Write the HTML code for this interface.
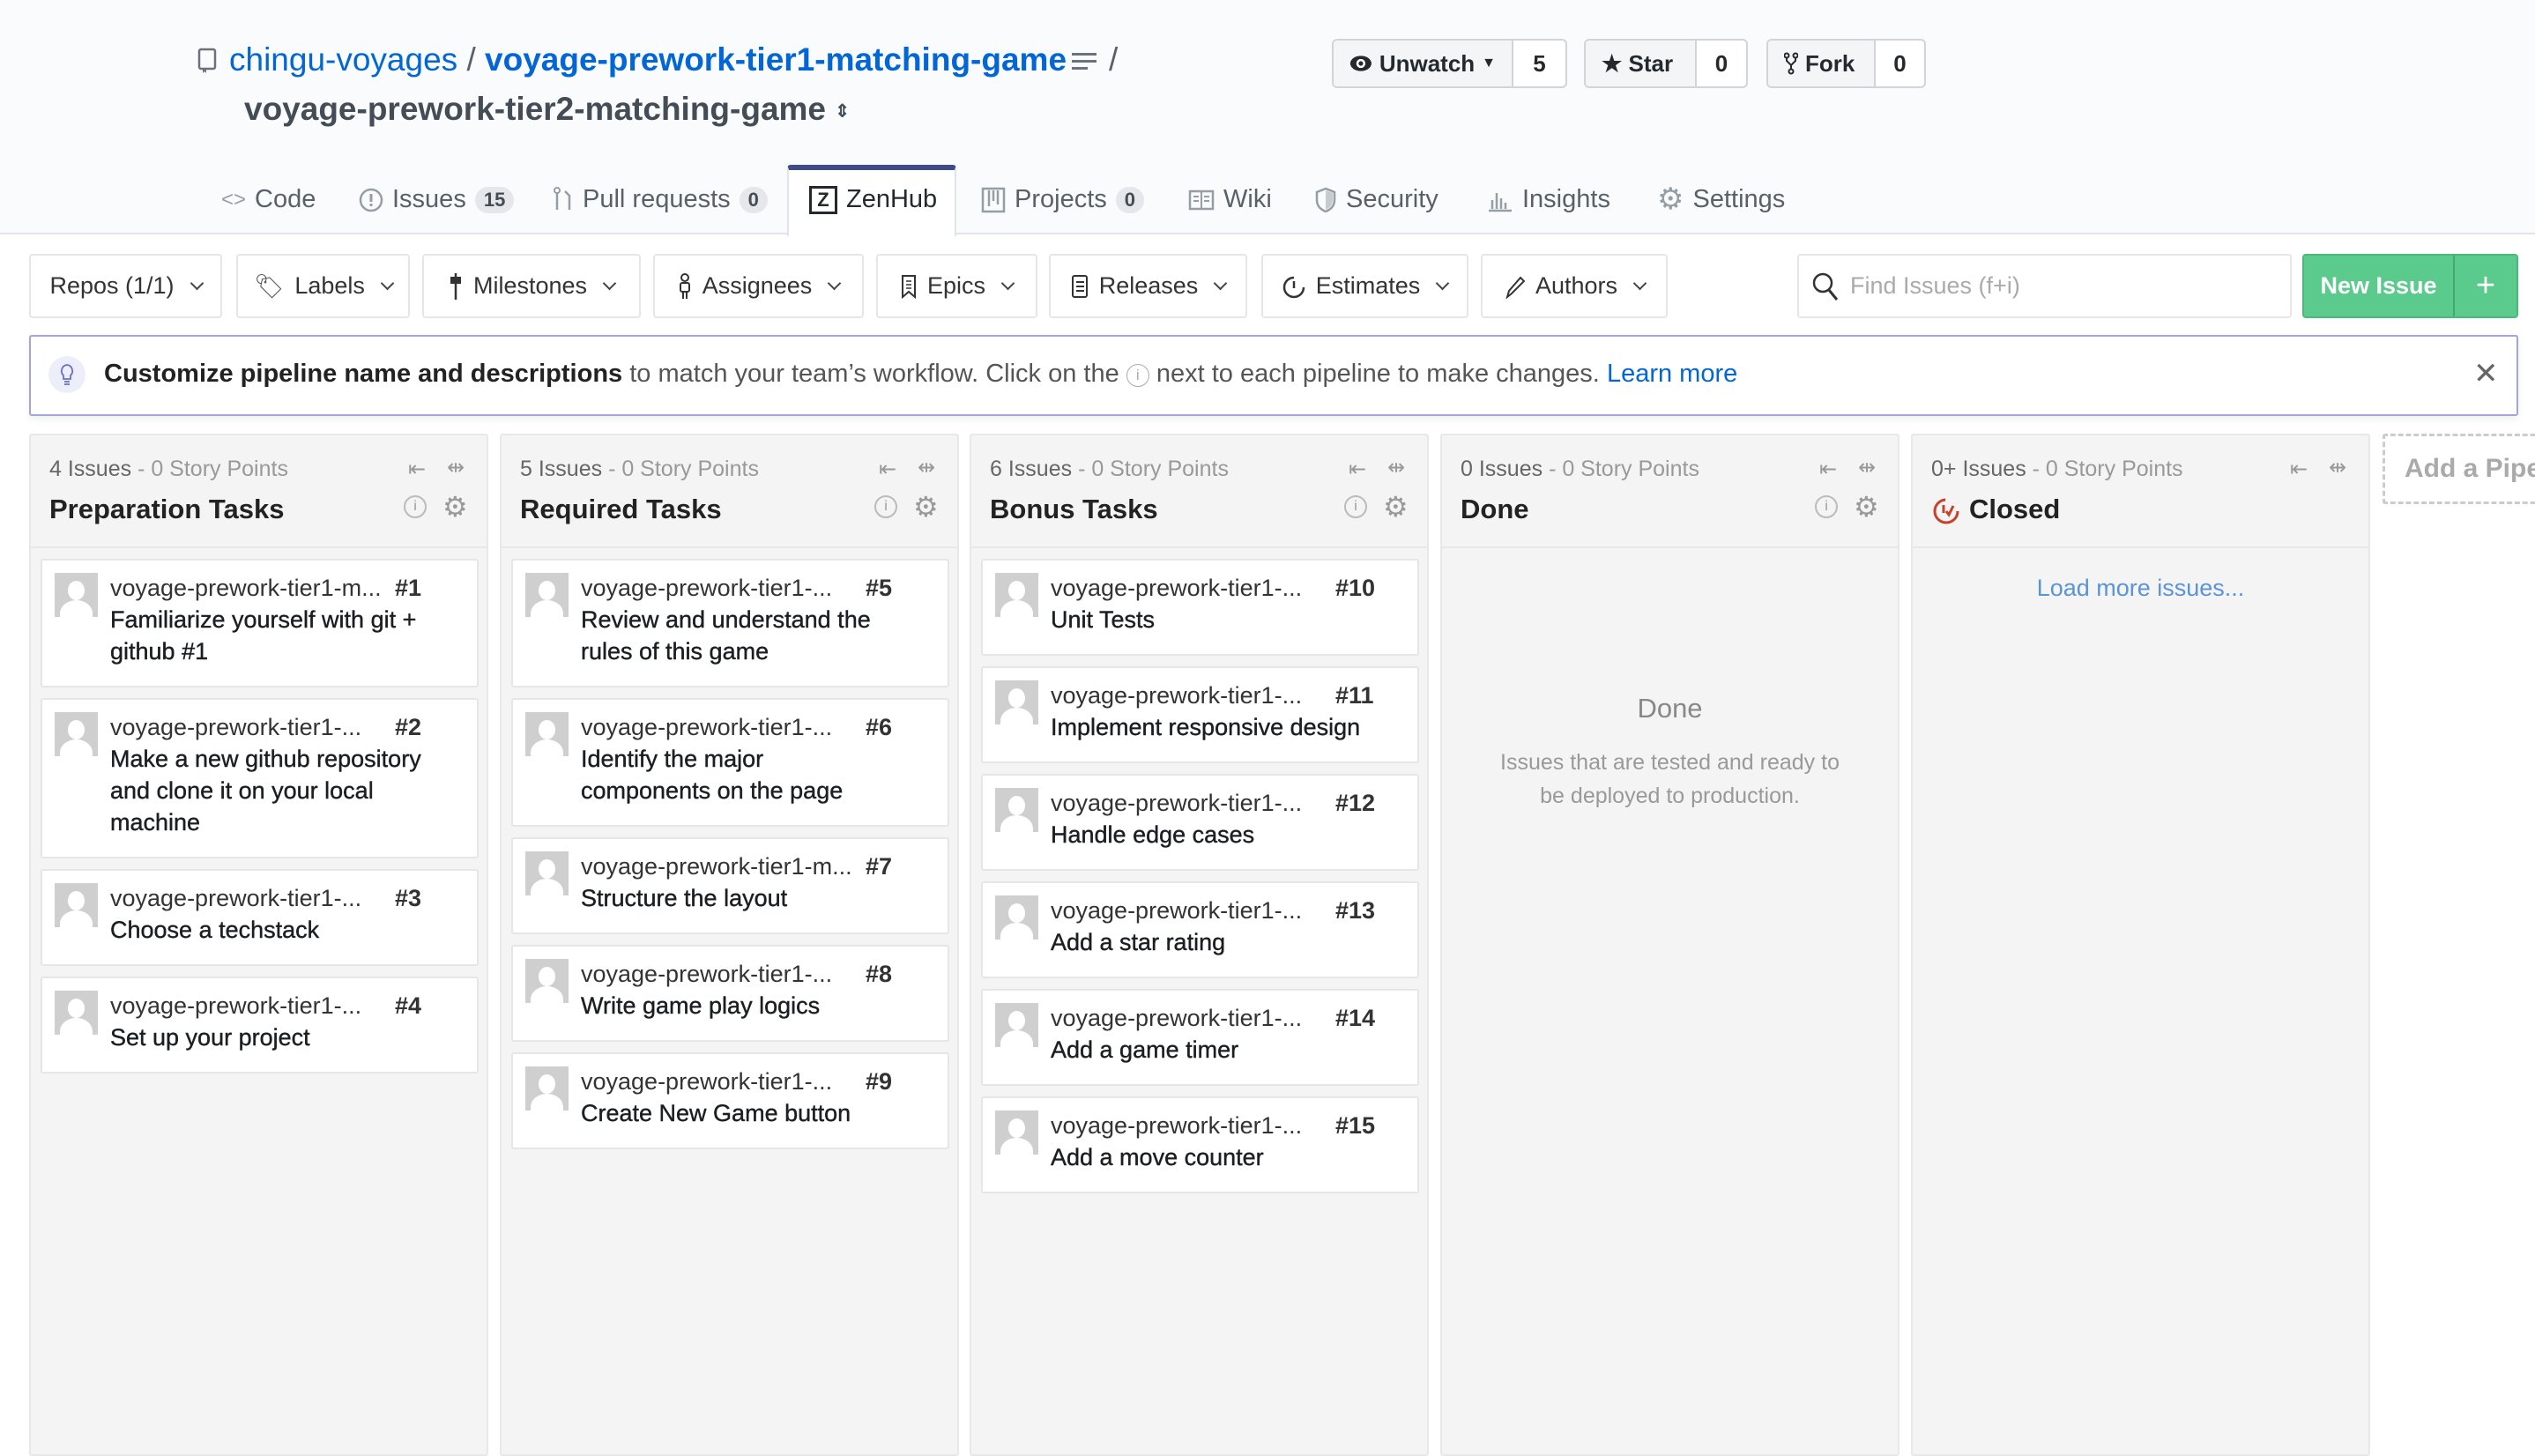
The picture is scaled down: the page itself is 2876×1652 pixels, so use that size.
<!DOCTYPE html>
<html><head><meta charset="utf-8">
<style>
*{box-sizing:border-box;margin:0;padding:0}
body{width:2876px;height:1640px;overflow:hidden;background:#fff;font-family:"Liberation Sans",Arial,sans-serif;color:#24292e;position:relative}
.a{position:absolute}
.head{left:0;top:0;width:2876px;height:266px;background:#fafbfc;border-bottom:2px solid #e1e4e8}
.blue{color:#0366d6}
.btn{position:absolute;top:44px;height:56px;border:2px solid #d1d5da;border-radius:6px;background:#fff;display:flex;font-size:26px;font-weight:bold;overflow:hidden}
.btn .l{background:#f3f5f7;display:flex;align-items:center;padding:0 18px;border-right:2px solid #d1d5da;gap:8px}
.btn .r{display:flex;align-items:center;justify-content:center;flex:1;font-weight:bold}
.tab{position:absolute;top:210px;font-size:29px;color:#586069;display:flex;align-items:center;gap:10px}
.cnt{background:#e5e7ea;border-radius:20px;font-size:22px;font-weight:bold;padding:2px 10px;color:#444d56}
.tb{position:absolute;top:288px;height:73px;border:2px solid #e6e6e6;border-radius:4px;background:#fff;display:flex;align-items:center;justify-content:center;gap:12px;font-size:27px;color:#333}
.chev{width:11px;height:11px;border-right:2.5px solid #444;border-bottom:2.5px solid #444;transform:rotate(45deg);margin:-6px 0 0 8px}
.col{position:absolute;top:492px;width:521px;height:1160px;background:#f4f4f4;border:2px solid #e8e8e8;border-radius:3px}
.ch{position:absolute;left:0;top:0;width:517px;height:128px;border-bottom:2px solid #e8e8e8}
.cnts{position:absolute;left:21px;top:24px;font-size:25px;color:#666}
.cnts span{color:#999}
.ttl{position:absolute;left:21px;top:66px;font-size:31px;font-weight:bold;color:#222}
.ic{position:absolute;color:#999;font-size:24px}
.cards{position:absolute;left:11px;top:140px;width:497px;display:flex;flex-direction:column;gap:12px}
.card{position:relative;background:#fff;border:2px solid #e6e6e6;border-radius:3px;padding:13px 10px 21px 77px;font-size:27px;line-height:36px;color:#333;white-space:nowrap}
.card .av{position:absolute;left:14px;top:14px;width:49px;height:50px;background:#cfcfcf;overflow:hidden}
.card .av:before{content:"";position:absolute;left:15px;top:9px;width:19px;height:22px;border-radius:50%;background:#fff}
.card .av:after{content:"";position:absolute;left:6px;top:31px;width:37px;height:30px;border-radius:50% 50% 0 0;background:#fff}
.card .n{position:absolute;left:400px;top:13px;font-weight:bold;color:#333}
.card .t{color:#1b1f23;-webkit-text-stroke:0.4px #1b1f23}
</style></head><body>
<div class="a head"></div>
<svg class="a" style="left:224px;top:54px" width="22" height="30" viewBox="0 0 22 30"><rect x="2" y="2" width="18" height="22" rx="2" fill="none" stroke="#6a737d" stroke-width="2.5"/><path d="M6 24v5l2-2 2 2v-5" fill="#6a737d"/></svg>
<div class="a" style="left:260px;top:47px;font-size:37px;white-space:nowrap"><span class="blue">chingu-voyages</span> <span style="color:#586069">/</span> <b class="blue" style="font-weight:bold;color:#0366d6">voyage-prework-tier1-matching-game</b></div>
<svg class="a" style="left:1216px;top:58px" width="28" height="24"><rect x="0" y="2" width="28" height="3" fill="#6a737d"/><rect x="0" y="10" width="28" height="3" fill="#6a737d"/><rect x="0" y="18" width="18" height="3" fill="#6a737d"/></svg>
<div class="a" style="left:1258px;top:47px;font-size:37px;color:#586069">/</div>
<div class="a" style="left:277px;top:103px;font-size:37px;font-weight:bold;color:#444d56;white-space:nowrap">voyage-prework-tier2-matching-game <span style="font-size:20px;vertical-align:middle">⇕</span></div>
<div class="btn" style="left:1511px;width:267px"><div class="l" style="width:204px"><svg width="30" height="22" viewBox="0 0 30 22"><ellipse cx="15" cy="11" rx="14" ry="10" fill="#24292e"/><circle cx="15" cy="11" r="6" fill="#fff"/><circle cx="15" cy="11" r="3" fill="#24292e"/></svg>Unwatch <span style="font-size:16px">▼</span></div><div class="r">5</div></div>
<div class="btn" style="left:1797px;width:186px"><div class="l" style="width:126px">★ Star</div><div class="r">0</div></div>
<div class="btn" style="left:2004px;width:181px"><div class="l" style="width:122px"><svg width="16" height="26" viewBox="0 0 16 26"><circle cx="3" cy="4" r="2.5" fill="none" stroke="#24292e" stroke-width="2"/><circle cx="13" cy="4" r="2.5" fill="none" stroke="#24292e" stroke-width="2"/><circle cx="8" cy="22" r="2.5" fill="none" stroke="#24292e" stroke-width="2"/><path d="M3 7v3l5 5 5-5V7M8 15v4" fill="none" stroke="#24292e" stroke-width="2"/></svg>Fork</div><div class="r">0</div></div>
<div class="tab" style="left:251px"><span style="font-size:24px;color:#959da5">&lt;&gt;</span>Code</div>
<div class="tab" style="left:407px"><svg width="28" height="28"><circle cx="14" cy="14" r="12" fill="none" stroke="#959da5" stroke-width="2.5"/><rect x="12.5" y="7" width="3" height="9" fill="#959da5"/><rect x="12.5" y="18" width="3" height="3" fill="#959da5"/></svg>Issues <span class="cnt">15</span></div>
<div class="tab" style="left:627px"><svg width="24" height="30"><path d="M5 4v22M19 26V10l-5-5" fill="none" stroke="#959da5" stroke-width="2.5"/><circle cx="5" cy="4" r="3" fill="#fff" stroke="#959da5" stroke-width="2"/></svg>Pull requests <span class="cnt">0</span></div>
<div class="a" style="left:893px;top:187px;width:192px;height:81px;background:#fff;border:2px solid #e1e4e8;border-top:6px solid #3f4a8a;border-bottom:none;border-radius:4px 4px 0 0"></div>
<div class="tab" style="left:918px;color:#24292e"><span style="display:inline-block;width:32px;height:32px;border:3px solid #24292e;font-size:22px;font-weight:bold;text-align:center;line-height:26px">Z</span>ZenHub</div>
<div class="tab" style="left:1113px"><svg width="28" height="30"><rect x="2" y="2" width="24" height="26" fill="none" stroke="#959da5" stroke-width="2.5"/><path d="M9 4v18M14 4v12M19 4v16" stroke="#959da5" stroke-width="2.5"/></svg>Projects <span class="cnt">0</span></div>
<div class="tab" style="left:1348px"><svg width="30" height="24"><rect x="2" y="2" width="26" height="20" fill="none" stroke="#959da5" stroke-width="2.5"/><path d="M15 2v20M6 8h6M6 13h6M18 8h6M18 13h6" stroke="#959da5" stroke-width="2"/></svg>Wiki</div>
<div class="tab" style="left:1491px"><svg width="26" height="30"><path d="M13 2L3 6v9c0 7 5 11 10 13 5-2 10-6 10-13V6z" fill="none" stroke="#959da5" stroke-width="2.5"/><path d="M13 4v22c4-2 8-5 8-11V7z" fill="#c6cbd1"/></svg>Security</div>
<div class="tab" style="left:1687px"><svg width="30" height="28"><path d="M2 26h26M6 24V14M11 24V6M16 24V12M21 24V17" stroke="#959da5" stroke-width="2.5"/></svg>Insights</div>
<div class="tab" style="left:1880px;top:206px"><span style="font-size:34px;color:#959da5">⚙</span>Settings</div>
<div class="tb" style="left:33px;width:219px">Repos (1/1)<i class="chev"></i></div>
<div class="tb" style="left:268px;width:197px"><span style="color:#555">🏷︎</span>Labels<i class="chev"></i></div>
<div class="tb" style="left:479px;width:248px"><svg width="16" height="30"><rect x="2" y="4" width="12" height="8" fill="#333"/><path d="M8 0v30" stroke="#333" stroke-width="2.5"/></svg>Milestones<i class="chev"></i></div>
<div class="tb" style="left:741px;width:239px"><svg width="16" height="30"><circle cx="8" cy="5" r="4" fill="none" stroke="#333" stroke-width="2"/><rect x="3" y="11" width="10" height="10" rx="2" fill="none" stroke="#333" stroke-width="2"/><path d="M6 21v8M10 21v8" stroke="#333" stroke-width="2"/></svg>Assignees<i class="chev"></i></div>
<div class="tb" style="left:994px;width:183px"><svg width="18" height="28"><path d="M2 2h14v24l-7-6-7 6z" fill="none" stroke="#333" stroke-width="2"/><path d="M6 8h6M6 12h6M6 16h6" stroke="#333" stroke-width="1.5"/></svg>Epics<i class="chev"></i></div>
<div class="tb" style="left:1190px;width:225px"><svg width="20" height="28"><rect x="2" y="2" width="16" height="24" rx="2" fill="none" stroke="#333" stroke-width="2"/><path d="M6 9h9M6 14h9M6 19h9" stroke="#333" stroke-width="2"/></svg>Releases<i class="chev"></i></div>
<div class="tb" style="left:1431px;width:235px"><svg width="26" height="28"><path d="M13 4a11 11 0 1 0 11 11" fill="none" stroke="#333" stroke-width="2.5"/><path d="M13 8v8" stroke="#333" stroke-width="2.5"/></svg>Estimates<i class="chev"></i></div>
<div class="tb" style="left:1680px;width:212px"><svg width="24" height="28"><path d="M4 26l2-7L19 4l4 4L9 22z" fill="none" stroke="#333" stroke-width="2"/></svg>Authors<i class="chev"></i></div>
<div class="a" style="left:2039px;top:288px;width:561px;height:73px;border:2px solid #e6e6e6;border-radius:4px;background:#fff;font-size:27px;color:#aaa;display:flex;align-items:center;padding-left:14px;gap:12px"><svg width="32" height="34"><circle cx="13" cy="13" r="10" fill="none" stroke="#333" stroke-width="2.5"/><path d="M20 21l9 11" stroke="#333" stroke-width="3"/></svg>Find Issues (f+i)</div>
<div class="a" style="left:2612px;top:288px;width:245px;height:73px;background:#5acb8c;border:2px solid #4fb77e;border-radius:4px;color:#fff;font-size:27px;font-weight:bold;display:flex;align-items:center"><span style="width:171px;text-align:center;border-right:2px solid #45a872;line-height:69px">New Issue</span><span style="flex:1;text-align:center;font-size:38px;font-weight:normal">+</span></div>
<div class="a" style="left:33px;top:380px;width:2824px;height:92px;border:2px solid #a3a6dc;border-radius:3px;background:#fff;box-shadow:0 4px 8px rgba(0,0,0,.06)"></div>
<div class="a" style="left:55px;top:404px;width:42px;height:42px;border-radius:50%;background:#eceefa;display:flex;align-items:center;justify-content:center"><svg width="20" height="28"><path d="M10 3a7 7 0 0 0-4 12v4h8v-4a7 7 0 0 0-4-12zM7 22h6M7 25h6" fill="none" stroke="#6a70c9" stroke-width="1.8"/></svg></div>
<div class="a" style="left:118px;top:408px;font-size:29px;color:#555;white-space:nowrap"><b style="color:#222">Customize pipeline name and descriptions</b> to match your team’s workflow. Click on the <span style="display:inline-block;width:26px;height:26px;border:1.5px solid #aaa;border-radius:50%;font-size:17px;text-align:center;line-height:23px;color:#aaa;vertical-align:2px">i</span> next to each pipeline to make changes. <span style="color:#0366d6">Learn more</span></div>
<div class="a" style="left:2806px;top:404px;font-size:34px;color:#666">✕</div>

<div class="col" style="left:33px"><div class="ch"><div class="cnts">4 Issues <span>- 0 Story Points</span></div><div class="ttl">Preparation Tasks</div><div class="ic" style="left:428px;top:24px">⇤</div><div class="ic" style="left:472px;top:22px">⇹</div><div class="ic" style="left:423px;top:68px;width:26px;height:26px;border:2px solid #bbb;border-radius:50%;font-size:16px;text-align:center;line-height:22px">i</div><div class="ic" style="left:467px;top:62px;font-size:32px">⚙</div></div>
<div class="cards">
<div class="card"><div class="av"></div><div>voyage-prework-tier1-m...</div><div class="n">#1</div><div class="t">Familiarize yourself with git +<br>github #1</div></div>
<div class="card"><div class="av"></div><div>voyage-prework-tier1-...</div><div class="n">#2</div><div class="t">Make a new github repository<br>and clone it on your local<br>machine</div></div>
<div class="card"><div class="av"></div><div>voyage-prework-tier1-...</div><div class="n">#3</div><div class="t">Choose a techstack</div></div>
<div class="card"><div class="av"></div><div>voyage-prework-tier1-...</div><div class="n">#4</div><div class="t">Set up your project</div></div>
</div></div>

<div class="col" style="left:567px"><div class="ch"><div class="cnts">5 Issues <span>- 0 Story Points</span></div><div class="ttl">Required Tasks</div><div class="ic" style="left:428px;top:24px">⇤</div><div class="ic" style="left:472px;top:22px">⇹</div><div class="ic" style="left:423px;top:68px;width:26px;height:26px;border:2px solid #bbb;border-radius:50%;font-size:16px;text-align:center;line-height:22px">i</div><div class="ic" style="left:467px;top:62px;font-size:32px">⚙</div></div>
<div class="cards">
<div class="card"><div class="av"></div><div>voyage-prework-tier1-...</div><div class="n">#5</div><div class="t">Review and understand the<br>rules of this game</div></div>
<div class="card"><div class="av"></div><div>voyage-prework-tier1-...</div><div class="n">#6</div><div class="t">Identify the major<br>components on the page</div></div>
<div class="card"><div class="av"></div><div>voyage-prework-tier1-m...</div><div class="n">#7</div><div class="t">Structure the layout</div></div>
<div class="card"><div class="av"></div><div>voyage-prework-tier1-...</div><div class="n">#8</div><div class="t">Write game play logics</div></div>
<div class="card"><div class="av"></div><div>voyage-prework-tier1-...</div><div class="n">#9</div><div class="t">Create New Game button</div></div>
</div></div>

<div class="col" style="left:1100px"><div class="ch"><div class="cnts">6 Issues <span>- 0 Story Points</span></div><div class="ttl">Bonus Tasks</div><div class="ic" style="left:428px;top:24px">⇤</div><div class="ic" style="left:472px;top:22px">⇹</div><div class="ic" style="left:423px;top:68px;width:26px;height:26px;border:2px solid #bbb;border-radius:50%;font-size:16px;text-align:center;line-height:22px">i</div><div class="ic" style="left:467px;top:62px;font-size:32px">⚙</div></div>
<div class="cards">
<div class="card"><div class="av"></div><div>voyage-prework-tier1-...</div><div class="n">#10</div><div class="t">Unit Tests</div></div>
<div class="card"><div class="av"></div><div>voyage-prework-tier1-...</div><div class="n">#11</div><div class="t">Implement responsive design</div></div>
<div class="card"><div class="av"></div><div>voyage-prework-tier1-...</div><div class="n">#12</div><div class="t">Handle edge cases</div></div>
<div class="card"><div class="av"></div><div>voyage-prework-tier1-...</div><div class="n">#13</div><div class="t">Add a star rating</div></div>
<div class="card"><div class="av"></div><div>voyage-prework-tier1-...</div><div class="n">#14</div><div class="t">Add a game timer</div></div>
<div class="card"><div class="av"></div><div>voyage-prework-tier1-...</div><div class="n">#15</div><div class="t">Add a move counter</div></div>
</div></div>

<div class="col" style="left:1634px"><div class="ch"><div class="cnts">0 Issues <span>- 0 Story Points</span></div><div class="ttl">Done</div><div class="ic" style="left:428px;top:24px">⇤</div><div class="ic" style="left:472px;top:22px">⇹</div><div class="ic" style="left:423px;top:68px;width:26px;height:26px;border:2px solid #bbb;border-radius:50%;font-size:16px;text-align:center;line-height:22px">i</div><div class="ic" style="left:467px;top:62px;font-size:32px">⚙</div></div>
<div class="a" style="left:0;top:292px;width:517px;text-align:center;font-size:31px;color:#888">Done</div>
<div class="a" style="left:0;top:352px;width:517px;text-align:center;font-size:25px;line-height:38px;color:#999;white-space:nowrap">Issues that are tested and ready to<br>be deployed to production.</div>
</div>

<div class="col" style="left:2168px"><div class="ch"><div class="cnts">0+ Issues <span>- 0 Story Points</span></div><div class="ttl" style="left:64px">Closed</div><svg class="a" style="left:22px;top:70px" width="32" height="32"><circle cx="16" cy="16" r="13" fill="none" stroke="#c6402a" stroke-width="3" stroke-dasharray="60 22"/><path d="M13 9v9M16 16l3 4 5-10" fill="none" stroke="#c6402a" stroke-width="3"/></svg><div class="ic" style="left:428px;top:24px">⇤</div><div class="ic" style="left:472px;top:22px">⇹</div></div>
<div class="a" style="left:0;top:158px;width:517px;text-align:center;font-size:27px;color:#5b94d6">Load more issues...</div>
</div>

<div class="a" style="left:2703px;top:492px;width:200px;height:80px;border:3px dashed #ccc;border-radius:3px;font-size:30px;font-weight:bold;color:#aaa;padding:20px 0 0 22px;white-space:nowrap">Add a Pipeline</div>
</body></html>
